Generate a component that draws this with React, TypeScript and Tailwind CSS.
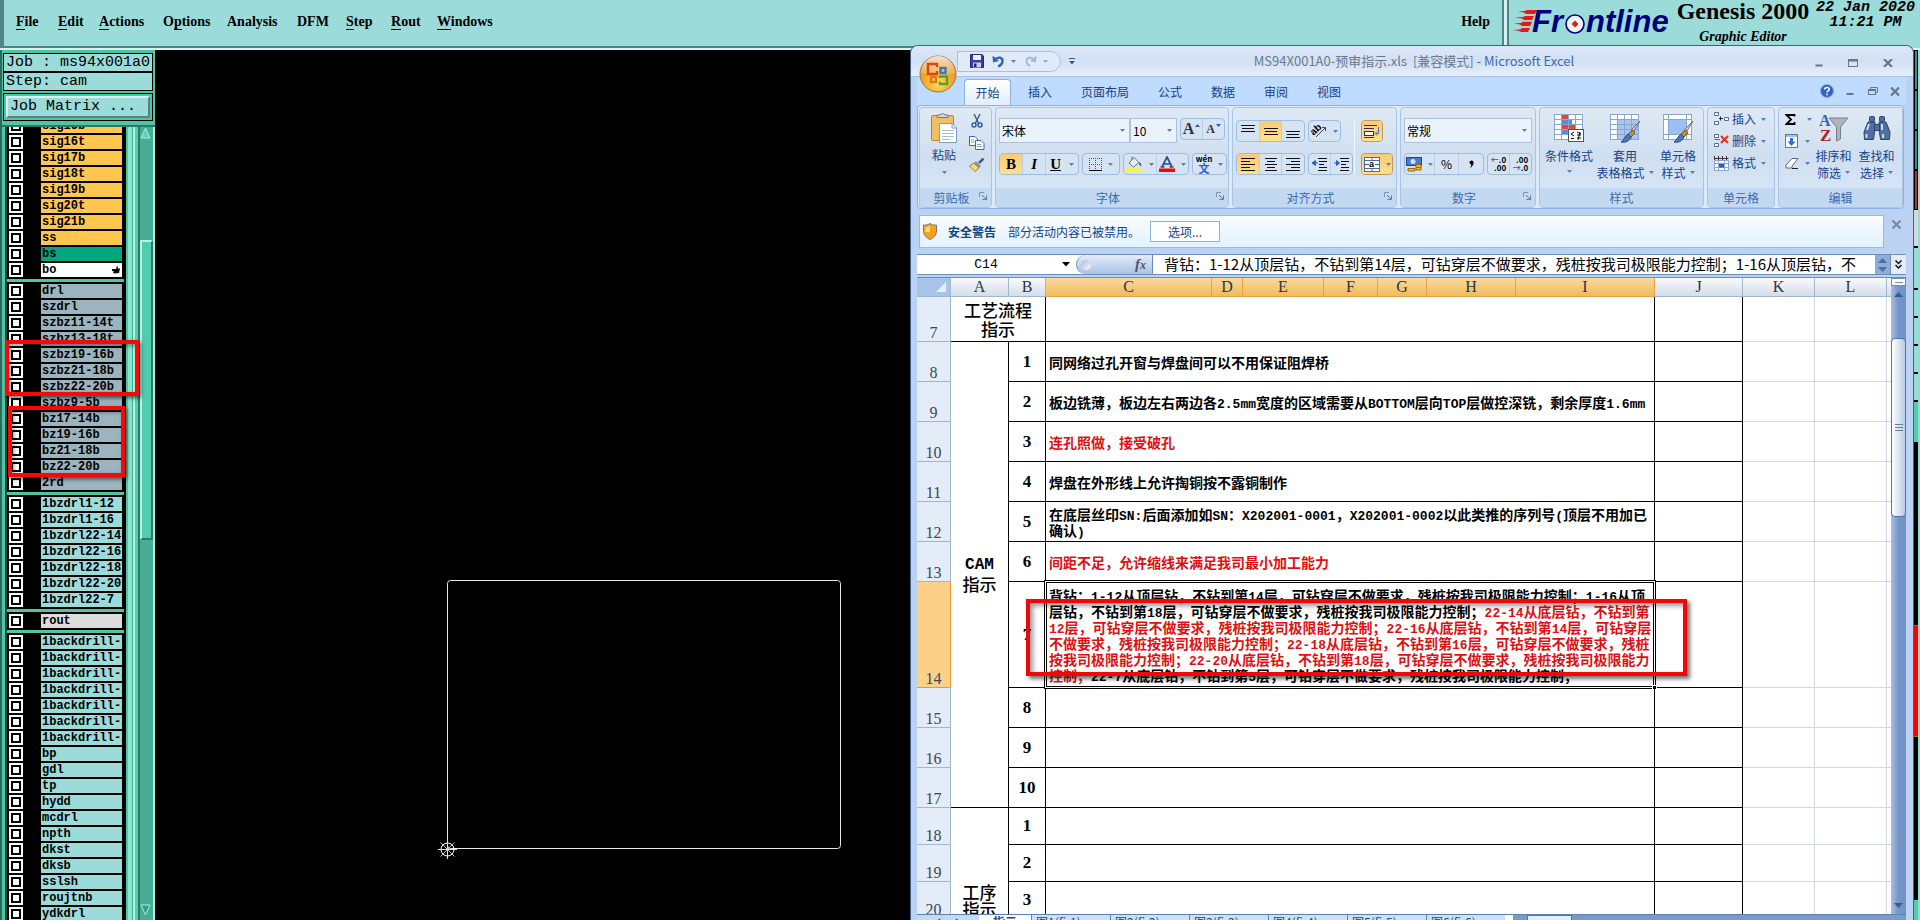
import React from "react";

const UI = "font-['Noto_Sans_CJK_SC',sans-serif]";
const SERIF = "font-['Liberation_Serif','Noto_Serif',serif]";
const MONO = "font-['Liberation_Mono',monospace]";

/* ---------- Genesis header ---------- */

const menus: [string, number, string][] = [
  ["File", 0, "w-[42px]"],
  ["Edit", 0, "w-[41px]"],
  ["Actions", 0, "w-[64px]"],
  ["Options", 1, "w-[64px]"],
  ["Analysis", -1, "w-[70px]"],
  ["DFM", -1, "w-[49px]"],
  ["Step", 0, "w-[45px]"],
  ["Rout", 0, "w-[46px]"],
  ["Windows", 0, "w-[70px]"],
];

function MenuLabel({ text, at }: { text: string; at: number }) {
  if (at < 0) return <>{text}</>;
  return (
    <>
      {text.slice(0, at)}
      <span className="border-b border-black">{text[at]}</span>
      {text.slice(at + 1)}
    </>
  );
}

function FrontlineLogo() {
  return (
    <svg width="162" height="28" viewBox="0 0 162 28" role="img" aria-label="Frontline">
      <g fill="#f01410">
        <path d="M5 3.500 L12 3 L14 2 L24 2 L22 6 L13 6 L11 4.500 Z" />
        <path d="M2 9.500 L10 9 L12 8 L21 8 L19 12 L11 12 L9 10.500 Z" />
        <path d="M1 15.500 L8 15 L10 13.800 L19 13.800 L17 18 L9 18 L7 16.500 Z" />
        <path d="M0 22 L7 21.500 L9 20 L17 20 L15 24 L8 24 L6 23 Z" />
      </g>
      <text
        x="19"
        y="24"
        fill="#00007c"
        fontFamily="Liberation Sans"
        fontWeight="bold"
        fontStyle="italic"
        fontSize="31"
      >
        Fr
      </text>
      <circle cx="62" cy="16" r="9" fill="#e8f8f8" stroke="#00007c" strokeWidth="1.600" />
      <path d="M62 12.500 L65.500 16 L62 19.500 L58.500 16 Z" fill="#f01410" />
      <text
        x="73"
        y="24"
        fill="#00007c"
        fontFamily="Liberation Sans"
        fontWeight="bold"
        fontStyle="italic"
        fontSize="31"
      >
        ntline
      </text>
    </svg>
  );
}

function Header() {
  return (
    <header className={`flex h-[50px] shrink-0 border-b-2 border-[#d8f4f2] bg-[#9bdbda] text-black ${SERIF}`}>
      <nav className="flex flex-1 items-start border-b-2 border-l-4 border-b-[#4f8584] border-l-[#4f8584] pt-[13px] pl-3 text-sm leading-[18px] font-bold">
        {menus.map(([text, at, w]) => (
          <button key={text} type="button" className={`shrink-0 text-left ${w}`}>
            <MenuLabel text={text} at={at} />
          </button>
        ))}
        <button type="button" className="mr-3 ml-auto">
          Help
        </button>
      </nav>
      <div className="w-[7px] border-x-2 border-[#4f8584] bg-[#d8f4f2]" />
      <div className="flex w-[411px] pl-1">
        <div className="pt-2">
          <FrontlineLogo />
        </div>
        <div className="flex w-[136px] flex-col items-center">
          <span className="text-2xl leading-[22px] font-bold">Genesis 2000</span>
          <span className="pt-1.5 text-sm leading-[18px] font-bold italic">Graphic Editor</span>
        </div>
        <div className={`flex flex-1 flex-col items-center text-[15px] leading-[15px] font-bold italic ${MONO}`}>
          <span>22 Jan 2020</span>
          <span>11:21 PM</span>
        </div>
      </div>
    </header>
  );
}

/* ---------- Layer list ---------- */

type Layer = [string, string];
const AQUA = "bg-[#9bdbda]";
const GREY = "bg-[#9bb4be]";
const GOLD = "bg-[#ffc64f]";

const layerGroups: Layer[][] = [
  [
    ["sig15b", GOLD],
    ["sig16t", GOLD],
    ["sig17b", GOLD],
    ["sig18t", GOLD],
    ["sig19b", GOLD],
    ["sig20t", GOLD],
    ["sig21b", GOLD],
    ["ss", GOLD],
    ["bs", "bg-[#00a67c]"],
    ["bo", "bg-white"],
  ],
  [
    "drl",
    "szdrl",
    "szbz11-14t",
    "szbz13-18t",
    "szbz19-16b",
    "szbz21-18b",
    "szbz22-20b",
    "szbz9-5b",
    "bz17-14b",
    "bz19-16b",
    "bz21-18b",
    "bz22-20b",
    "2rd",
  ].map((n): Layer => [n, GREY]),
  ["1bzdrl1-12", "1bzdrl1-16", "1bzdrl22-14", "1bzdrl22-16", "1bzdrl22-18", "1bzdrl22-20", "1bzdrl22-7"].map(
    (n): Layer => [n, AQUA],
  ),
  [["rout", "bg-[#dcdcdc]"]],
  [
    "1backdrill-1",
    "1backdrill-1",
    "1backdrill-2",
    "1backdrill-2",
    "1backdrill-2",
    "1backdrill-2",
    "1backdrill-2",
    "bp",
    "gdl",
    "tp",
    "hydd",
    "mcdrl",
    "npth",
    "dkst",
    "dksb",
    "sslsh",
    "roujtnb",
    "ydkdrl",
  ].map((n): Layer => [n, AQUA]),
];

function LayerRow({ id, name, color }: { id: string; name: string; color: string }) {
  return (
    <div className="flex h-4 items-start">
      <span className="flex h-3.5 w-3.5 items-center justify-center bg-white">
        <input
          id={id}
          type="checkbox"
          className="block h-2.5 w-2.5 appearance-none border-2 border-black bg-white"
        />
      </span>
      <label
        htmlFor={id}
        className={`ml-[18px] flex h-3.5 w-[81px] items-center overflow-hidden pl-px text-xs leading-[14px] font-bold whitespace-nowrap text-black ${MONO} ${color}`}
      >
        {name}
        {name === "bo" && (
          <svg className="mr-0.5 ml-auto" width="8" height="8" viewBox="0 0 8 8" aria-hidden="true">
            <path d="M0 3 L4 3 L5 0 L6 1 L5.500 2.500 L8 2.500 L7 7 L2 7.500 L1 6 L2 5 L0 5 Z" fill="#000" />
          </svg>
        )}
      </label>
    </div>
  );
}

function Sidebar() {
  return (
    <aside
      className={`relative flex w-[155px] shrink-0 flex-col border-l-2 border-[#2c6a5e] bg-[#52c4a4] pt-[3px] text-black ${MONO}`}
    >
      <div className="mx-px mr-0.5 border border-black bg-[#9bdbda] pl-0.5 text-[15px] leading-[17px] whitespace-nowrap">
        Job : ms94x001a0
      </div>
      <div className="mx-px mr-0.5 border border-black bg-[#9bdbda] pl-0.5 text-[15px] leading-[17px]">Step: cam</div>
      <div className="mx-px mt-0.5 mr-0.5 border border-black bg-[#52c4a4] p-0.5">
        <button
          type="button"
          className="block w-full border-2 border-t-[#d8f4f2] border-r-[#4f8584] border-b-[#4f8584] border-l-[#d8f4f2] bg-[#9bdbda] pl-0.5 text-left text-[15px] leading-[18px]"
        >
          Job Matrix ...
        </button>
      </div>
      <div className="mt-1 flex min-h-0 flex-1 border-t-2 border-[#2c7a66]">
        <div className="w-[5px] border-r-2 border-[#1f4f46] bg-[#52c4a4]" />
        <div className="flex w-[117px] flex-col gap-[3px] overflow-hidden bg-[#52c4a4]">
          {layerGroups.map((group, g) => (
            <div key={g} className={g === 0 ? "-mt-2.5 bg-black pt-0.5 pl-0.5" : "bg-black pt-0.5 pl-0.5"}>
              {group.map(([name, color], i) => (
                <LayerRow key={i} id={`layer-${g}-${i}`} name={name} color={color} />
              ))}
            </div>
          ))}
        </div>
        <div className="flex flex-1">
          <div className="w-1 border-l-2 border-black bg-[#52c4a4]" />
          <div className="w-1 bg-[#8ce6cc]" />
          <div className="w-px bg-[#3fae90]" />
          <div className="w-0.5 bg-[#b4f4e4]" />
          <div className="w-[3px] bg-[#52d0b0]" />
          <div className="flex flex-1 flex-col border-r-2 border-l-2 border-r-[#a8f0dc] border-l-[#2c7a66] bg-[#45ae95]">
            <svg width="11" height="12" viewBox="0 0 11 12" aria-hidden="true">
              <path d="M5.500 1 L10 11 L1 11 Z" fill="#62d0b6" stroke="#a8f0dc" />
            </svg>
            <div className="mt-[101px] h-[300px] border-2 border-t-[#b4f4e4] border-r-[#2c7a66] border-b-[#2c7a66] border-l-[#b4f4e4] bg-[#52ccb0]" />
            <svg className="mt-auto mb-1" width="11" height="12" viewBox="0 0 11 12" aria-hidden="true">
              <path d="M1 1 L10 1 L5.500 11 Z" fill="#3a9c86" stroke="#a8f0dc" />
            </svg>
          </div>
        </div>
      </div>
      {/* annotation frames over the selected layers */}
      <div className="pointer-events-none absolute top-[290px] left-[3px] h-[56px] w-[134px] border-4 border-[#f80808] shadow-[2px_2px_4px_rgba(0,0,0,0.6),inset_2px_2px_4px_rgba(0,0,0,0.4)]" />
      <div className="pointer-events-none absolute top-[356px] left-[6px] h-[71px] w-[117px] border-4 border-[#f80808] shadow-[2px_2px_4px_rgba(0,0,0,0.6),inset_2px_2px_4px_rgba(0,0,0,0.4)]" />
    </aside>
  );
}

function Canvas() {
  return (
    <main className="min-w-0 flex-1 overflow-hidden bg-black">
      <svg width="720" height="860" viewBox="155 50 720 860" className="block" aria-label="board outline">
        <rect x="447.500" y="580.500" width="393" height="268" rx="3" fill="none" stroke="#e8e8e8" />
        <g stroke="#e0e0e0" fill="none" strokeWidth="1">
          <circle cx="447.500" cy="849.500" r="6.500" stroke="#fff" />
          <path d="M438 849.500 H457 M447.500 840 V859" />
          <path d="M440.500 842.500 L454.500 856.500 M454.500 842.500 L440.500 856.500" stroke="#c0c0c0" />
        </g>
      </svg>
    </main>
  );
}

function RightStrip() {
  return (
    <div className="flex w-[6px] shrink-0 flex-col border-r-2 border-[#8fe0cc] bg-black">
      <div className="h-10 border border-black bg-[#4f8584]" />
      <div className="h-10 border border-black bg-[#4f8584]" />
      <div className="h-10 border border-black bg-[#4f8584]" />
      <div className="h-10 border border-black bg-[#b03030]" />
      <div className="h-9 bg-[#d4d8e0]" />
      <div className="h-11 border-y-2 border-black bg-[#9bdbda]" />
      <div className="h-7 border-b-2 border-black bg-[#9bdbda]" />
      <div className="h-7 border-b-2 border-black bg-[#9bdbda]" />
      <div className="h-7 border-b-2 border-black bg-[#9bdbda]" />
      <div className="h-7 border-b-2 border-black bg-[#9bdbda]" />
      <div className="h-10 bg-[#52ccb0]" />
      <div className="h-[183px] bg-black" />
      <div className="h-[112px] border-y border-[#b06010] bg-[#ff0000]" />
      <div className="flex-1 bg-black" />
      <div className="h-5 bg-[#52ccb0]" />
    </div>
  );
}

/* ---------- Excel window ---------- */

function Caret({ className = "" }: { className?: string }) {
  return (
    <svg className={`shrink-0 ${className}`} width="5" height="3" viewBox="0 0 5 3" aria-hidden="true">
      <path d="M0 0 H5 L2.500 3 Z" fill="#5a7fb4" />
    </svg>
  );
}

function OfficeButton() {
  return (
    <button type="button" aria-label="Office" className="absolute top-[9px] left-2 rounded-full">
      <svg width="38" height="38" viewBox="0 0 38 38">
        <defs>
          <radialGradient id="orb" cx="50%" cy="75%" r="75%">
            <stop offset="0" stopColor="#ffe060" />
            <stop offset="0.5" stopColor="#f3a92a" />
            <stop offset="1" stopColor="#d88a3a" />
          </radialGradient>
          <linearGradient id="gloss" x1="0" y1="0" x2="0" y2="1">
            <stop offset="0" stopColor="#fff" stopOpacity="0.75" />
            <stop offset="1" stopColor="#fff" stopOpacity="0.1" />
          </linearGradient>
        </defs>
        <circle cx="19" cy="19" r="18" fill="url(#orb)" stroke="#98794c" />
        <path d="M2 18 A17 17 0 0 1 36 18 Q19 23 2 18 Z" fill="url(#gloss)" />
        <g fill="none" strokeWidth="2.400">
          <path d="M18 12 V9 H9 V19 H18 V16" stroke="#d8451c" />
          <rect x="21.500" y="13" width="5" height="5" stroke="#3a76c4" />
          <rect x="12" y="22" width="5" height="5" stroke="#e07818" />
          <path d="M21 23 V21.500 H28 V29 H21 V26.500" stroke="#5aa030" />
        </g>
      </svg>
    </button>
  );
}

function TitleBar() {
  return (
    <div className="flex h-[30px] items-center bg-gradient-to-b from-[#dce8f8] via-[#d2e0f4] to-[#e6effb] pr-5 text-[#5a7fb4]">
      <div className="ml-[46px] flex h-[21px] items-center rounded-r-full border border-[#a9c0e2] bg-[#e0eaf8] pr-3 pl-3">
        <button type="button" aria-label="保存">
          <svg width="14" height="14" viewBox="0 0 14 14">
            <path d="M0.500 0.500 H12 L13.500 2 V13.500 H0.500 Z" fill="#3a3fa0" stroke="#22277a" />
            <rect x="3" y="1" width="8" height="5" fill="#e8f0ff" />
            <rect x="3" y="8.500" width="8" height="5" fill="#c8cce8" />
            <rect x="4" y="9.500" width="2.500" height="3.500" fill="#22277a" />
          </svg>
        </button>
        <button type="button" aria-label="撤消" className="ml-2 flex items-center gap-1.5">
          <svg width="13" height="13" viewBox="0 0 13 13">
            <path
              d="M2.500 5 C6 1 11 2.500 10.500 6.500 C10.200 9 8.500 10.500 6 11.500"
              fill="none"
              stroke="#3562b8"
              strokeWidth="2.400"
            />
            <path d="M0.500 0.500 L1 7.500 L7 6 Z" fill="#3562b8" />
          </svg>
          <Caret />
        </button>
        <button type="button" aria-label="恢复" className="ml-2 flex items-center gap-1.5">
          <svg width="13" height="13" viewBox="0 0 13 13">
            <path d="M10 5 C7 1 2 2.500 2.500 6.500 C2.800 9 4 10 6 11" fill="none" stroke="#a6b8d6" strokeWidth="2" />
            <path d="M12.500 0.500 L12 7.500 L6 6 Z" fill="#a6b8d6" />
          </svg>
          <Caret className="opacity-60" />
        </button>
      </div>
      <svg className="ml-2" width="6" height="7" viewBox="0 0 6 7" aria-hidden="true">
        <path d="M0 0.500 H6" stroke="#3a5a8a" />
        <path d="M0 3 H6 L3 6.500 Z" fill="#3a5a8a" />
      </svg>
      <div className="flex flex-1 justify-center pr-[62px] text-[13px] whitespace-pre">
        <span className="text-[#6b7a8e]">MS94X001A0-预审指示.xls&nbsp; [兼容模式]</span>
        <span className="text-[#3e6aaa]"> - Microsoft Excel</span>
      </div>
      <div className="flex w-[78px] items-center justify-between pt-1">
        <button type="button" aria-label="最小化">
          <svg width="8" height="8" viewBox="0 0 8 8">
            <path d="M0.500 6.500 H7.500" stroke="#6a7686" strokeWidth="2" />
          </svg>
        </button>
        <button type="button" aria-label="最大化">
          <svg width="10" height="8" viewBox="0 0 10 8">
            <rect x="0.500" y="0.500" width="9" height="7" fill="none" stroke="#6a7686" />
            <path d="M0 1.500 H10" stroke="#6a7686" strokeWidth="2" />
          </svg>
        </button>
        <button type="button" aria-label="关闭">
          <svg width="10" height="8" viewBox="0 0 10 8">
            <path d="M1 0 L9 8 M9 0 L1 8" stroke="#6a7686" strokeWidth="2.200" />
          </svg>
        </button>
      </div>
    </div>
  );
}

const ribbonTabs: [string, string][] = [
  ["插入", "w-[58px]"],
  ["页面布局", "w-[72px]"],
  ["公式", "w-[58px]"],
  ["数据", "w-[48px]"],
  ["审阅", "w-[58px]"],
  ["视图", "w-[48px]"],
];

function TabRow() {
  return (
    <div className="flex h-7 items-end bg-[#bfdbff] pl-[47px] text-xs text-[#15428b]">
      <button
        type="button"
        className="h-[26px] w-[47px] rounded-t border border-b-0 border-[#8db2e3] bg-gradient-to-b from-white to-[#e3edf9]"
      >
        开始
      </button>
      {ribbonTabs.map(([t, w]) => (
        <button key={t} type="button" className={`h-[26px] ${w}`}>
          {t}
        </button>
      ))}
      <div className="mr-1.5 ml-auto flex h-full items-center gap-3">
        <button type="button" aria-label="帮助">
          <svg width="14" height="14" viewBox="0 0 14 14">
            <circle cx="7" cy="7" r="6.500" fill="#2f63c4" stroke="#8aa8dc" />
            <path
              d="M4.700 5.500 C4.700 2.800 9.300 2.800 9.300 5.300 C9.300 6.800 7 6.800 7 8.500 M7 9.700 V11.200"
              fill="none"
              stroke="#fff"
              strokeWidth="1.600"
            />
          </svg>
        </button>
        <svg width="8" height="8" viewBox="0 0 8 8" aria-hidden="true">
          <path d="M0.500 7 H7.500" stroke="#6a7686" strokeWidth="2" />
        </svg>
        <svg className="ml-0.5" width="10" height="9" viewBox="0 0 10 9" aria-hidden="true">
          <path d="M2.500 2 V0.500 H9.500 V5.500 H8" fill="none" stroke="#6a7686" />
          <rect x="0.500" y="2.500" width="7" height="5" fill="none" stroke="#6a7686" />
          <path d="M0 3 H8" stroke="#6a7686" strokeWidth="2" />
        </svg>
        <svg width="10" height="9" viewBox="0 0 10 9" aria-hidden="true">
          <path d="M1 0.500 L9 8.500 M9 0.500 L1 8.500" stroke="#6a7686" strokeWidth="2.200" />
        </svg>
      </div>
    </div>
  );
}

function Group({
  label,
  width,
  launcher,
  children,
}: {
  label: string;
  width: string;
  launcher?: boolean;
  children: React.ReactNode;
}) {
  return (
    <section
      className={`flex h-[101px] shrink-0 flex-col overflow-hidden rounded border border-[#a9c4e4] bg-gradient-to-b from-[#dfe9f5] via-[#cfdff0] to-[#dbe9f8] ${width}`}
    >
      <div className="min-h-0 flex-1">{children}</div>
      <div className="flex h-[19px] items-center bg-[#c2d9f1] px-1 text-xs text-[#3e6aaa]">
        <span className="flex-1 text-center">{label}</span>
        {launcher && (
          <svg className="mb-1" width="8" height="8" viewBox="0 0 8 8" aria-hidden="true">
            <path d="M0.500 5 V0.500 H5" fill="none" stroke="#7a94ba" />
            <path d="M3 3 L7 7 M7.500 3.500 V7.500 H3.500" fill="none" stroke="#5a7aa8" />
          </svg>
        )}
      </div>
    </section>
  );
}

function Cluster({ className = "", children }: { className?: string; children: React.ReactNode }) {
  return (
    <div
      className={`flex h-[22px] shrink-0 divide-x divide-[#b9cee8] overflow-hidden rounded-sm border border-[#9ebce0] bg-[#d5e3f3] ${className}`}
    >
      {children}
    </div>
  );
}

function Tool({
  label,
  on,
  drop,
  className = "",
  children,
}: {
  label: string;
  on?: boolean;
  drop?: boolean;
  className?: string;
  children: React.ReactNode;
}) {
  return (
    <button
      type="button"
      aria-label={label}
      className={`flex flex-1 items-center justify-center gap-1.5 ${on ? "bg-gradient-to-b from-[#fbc97a] to-[#fde08c]" : ""} ${className}`}
    >
      {children}
      {drop && <Caret />}
    </button>
  );
}

function Lines({ rows, y, step }: { rows: [number, number][]; y: number; step: number }) {
  return (
    <svg width="14" height="16" viewBox="0 0 14 16" aria-hidden="true">
      {rows.map(([x, w], i) => (
        <rect key={i} x={x} y={y + i * step} width={w} height={step > 3 ? 2 : 1} fill="#111" />
      ))}
    </svg>
  );
}

const three: [number, number][] = [
  [0, 14],
  [1, 12],
  [0, 14],
];

function Combo({ id, label, value, width }: { id: string; label: string; value: string; width: string }) {
  return (
    <div className={`relative flex h-[25px] shrink-0 items-center border border-[#abc1de] bg-[#eaf2fb] ${width}`}>
      <label htmlFor={id} className="sr-only">
        {label}
      </label>
      <select id={id} className="h-full w-full appearance-none bg-transparent pl-0.5 text-xs text-black">
        <option>{value}</option>
      </select>
      <Caret className="pointer-events-none absolute right-1" />
    </div>
  );
}

function Clipboard() {
  return (
    <Group label="剪贴板" width="w-[73px]" launcher>
      <div className="flex justify-between pt-1 pr-1.5 pl-2.5">
        <button type="button" className="flex flex-col items-center text-xs leading-4 text-[#15428b]">
          <svg width="28" height="31" viewBox="0 0 28 31" aria-hidden="true">
            <rect x="1.500" y="3.500" width="22" height="25" rx="1.500" fill="#f0bf62" stroke="#b8852f" />
            <path d="M7 5.500 V3 H10 A3 3 0 0 1 15 3 H18 V5.500 Z" fill="#d5d9de" stroke="#777" />
            <path d="M9.500 11.500 H22 L26.500 16 V30.500 H9.500 Z" fill="#fff" stroke="#7d9cc6" />
            <path d="M22 11.500 V16 H26.500" fill="none" stroke="#7d9cc6" />
            <path d="M12 18.500 H24 M12 21.500 H24 M12 24.500 H24 M12 27.500 H20" stroke="#a8bcd8" />
          </svg>
          <span className="mt-1">粘贴</span>
          <Caret className="mt-2" />
        </button>
        <div className="flex flex-col items-center gap-2 pt-0.5">
          <svg width="12" height="14" viewBox="0 0 12 14" aria-hidden="true">
            <path d="M3 0 L7.500 9 M9 0 L4.500 9" stroke="#4a5e80" strokeWidth="1.500" />
            <circle cx="3" cy="11" r="2" fill="none" stroke="#2f5cac" strokeWidth="1.500" />
            <circle cx="9" cy="11" r="2" fill="none" stroke="#2f5cac" strokeWidth="1.500" />
          </svg>
          <svg width="16" height="14" viewBox="0 0 16 14" aria-hidden="true">
            <path d="M0.500 0.500 H6 L8.500 3 V9.500 H0.500 Z" fill="#fff" stroke="#3e68ae" />
            <path d="M6.500 4.500 H12 L15 7.500 V13.500 H6.500 Z" fill="#fff" stroke="#3e68ae" />
            <path d="M2 4 H5 M2 6 H5 M8 8.500 H12 M8 10.500 H13" stroke="#7da0d8" />
          </svg>
          <svg width="16" height="14" viewBox="0 0 16 14" aria-hidden="true">
            <path d="M14.500 0.500 L10 5" stroke="#4a5e80" strokeWidth="2.500" />
            <path d="M7 3 L12 8 L10 10 L5 5 Z" fill="#8a94a8" />
            <path d="M5 5 L10 10 L6 13.500 L0.500 8 Z" fill="#f4d678" stroke="#a88020" />
          </svg>
        </div>
      </div>
    </Group>
  );
}

function FontGroup() {
  return (
    <Group label="字体" width="w-[234px]" launcher>
      <div className="flex px-[3px] pt-2.5">
        <Combo id="font-name" label="字体" value="宋体" width="w-[131px]" />
        <Combo id="font-size" label="字号" value="10" width="w-[47px]" />
        <Cluster className={`ml-[3px] w-[45px] ${SERIF}`}>
          <Tool label="增大字号" className="gap-px text-base font-bold text-[#333]">
            A
            <svg className="mb-2" width="5" height="3" viewBox="0 0 5 3">
              <path d="M0 3 H5 L2.500 0 Z" fill="#2f5cac" />
            </svg>
          </Tool>
          <Tool label="减小字号" className="gap-px text-xs font-bold text-[#333]">
            A
            <svg className="mb-2" width="5" height="3" viewBox="0 0 5 3">
              <path d="M0 0 H5 L2.500 3 Z" fill="#2f5cac" />
            </svg>
          </Tool>
        </Cluster>
      </div>
      <div className="flex gap-[3px] px-[3px] pt-2.5">
        <Cluster className={`w-[80px] ${SERIF}`}>
          <Tool label="加粗" on className="text-[15px] font-bold">
            B
          </Tool>
          <Tool label="倾斜" className="text-[15px] font-bold italic">
            I
          </Tool>
          <Tool label="下划线" drop className="gap-2 px-1 text-[15px] font-bold">
            <span className="underline">U</span>
          </Tool>
        </Cluster>
        <Cluster className="w-[38px]">
          <Tool label="边框" drop>
            <svg width="13" height="13" viewBox="0 0 13 13">
              <path
                d="M0.500 0 V12 M6.500 0 V12 M12.500 0 V12 M0 0.500 H13 M0 6.500 H13"
                stroke="#555"
                strokeDasharray="1 1"
              />
              <path d="M0 12.500 H13" stroke="#000" />
            </svg>
          </Tool>
        </Cluster>
        <Cluster className="w-[66px]">
          <Tool label="填充颜色" drop>
            <svg width="17" height="16" viewBox="0 0 17 16">
              <path d="M3 7 L8 1.500 L13 6.500 L7.500 11 Z" fill="#e8eef8" stroke="#5a6e90" />
              <path d="M6 4 V0.500" stroke="#5a6e90" />
              <path d="M13 6 C15.500 7 15.500 9 15 10.500 C13.500 10 13 8 13 6 Z" fill="#2f5cac" />
              <rect x="0" y="12.500" width="16" height="3.500" fill="#ffff00" />
            </svg>
          </Tool>
          <Tool label="字体颜色" drop>
            <svg width="16" height="16" viewBox="0 0 16 16">
              <path
                d="M3 11 L8 1 L13 11 M5 8 H11 M1.500 11 H5.500 M10.500 11 H14.500"
                fill="none"
                stroke="#2c4f8e"
                strokeWidth="1.700"
              />
              <rect x="0" y="12.500" width="16" height="3.500" fill="#ff0000" />
            </svg>
          </Tool>
        </Cluster>
        <Cluster className="w-[35px]">
          <Tool label="拼音" drop className="gap-1">
            <span className="flex flex-col items-center text-[8px] leading-[9px] font-bold text-black">
              wén
              <span className="text-[11px] leading-[11px] font-bold text-[#2f5cc4]">文</span>
            </span>
          </Tool>
        </Cluster>
      </div>
    </Group>
  );
}

function AlignGroup() {
  return (
    <Group label="对齐方式" width="w-[165px]" launcher>
      <div className="flex px-[3px] pt-3">
        <div className="flex w-[120px] flex-col gap-[11px] border-r border-[#f4f8fd]">
          <div className="flex gap-[3px]">
            <Cluster className="w-[69px]">
              <Tool label="顶端对齐">
                <Lines rows={three} y={2} step={3} />
              </Tool>
              <Tool label="垂直居中" on>
                <Lines rows={three} y={5} step={3} />
              </Tool>
              <Tool label="底端对齐">
                <Lines rows={three} y={8} step={3} />
              </Tool>
            </Cluster>
            <Cluster className="w-[33px]">
              <Tool label="方向" drop className="gap-1">
                <svg width="16" height="14" viewBox="0 0 16 14">
                  <path d="M5 13 L14 4" stroke="#445" />
                  <path d="M14.500 7 V3.500 H11" fill="none" stroke="#445" />
                  <text
                    x="0"
                    y="9"
                    fontSize="10"
                    fontFamily="Liberation Sans"
                    fontWeight="bold"
                    transform="rotate(-42 5 7)"
                  >
                    ab
                  </text>
                </svg>
              </Tool>
            </Cluster>
          </div>
          <div className="flex gap-[3px]">
            <Cluster className="w-[69px]">
              <Tool label="左对齐" on>
                <Lines rows={[[0, 14], [0, 9], [0, 14], [0, 9], [0, 14]]} y={2} step={3} />
              </Tool>
              <Tool label="居中">
                <Lines rows={[[1, 12], [3, 8], [1, 12], [3, 8], [1, 12]]} y={2} step={3} />
              </Tool>
              <Tool label="右对齐">
                <Lines rows={[[0, 14], [5, 9], [0, 14], [5, 9], [0, 14]]} y={2} step={3} />
              </Tool>
            </Cluster>
            <Cluster className="w-[45px]">
              <Tool label="减少缩进">
                <svg width="15" height="13" viewBox="0 0 15 13">
                  <path d="M6 0.500 H15 M7 3.500 H15 M7 6.500 H12 M7 9.500 H15 M6 12.500 H15" stroke="#111" />
                  <path d="M0 5 L3.500 2.500 V7.500 Z M3 5 H6" fill="#2f5cc4" stroke="#2f5cc4" />
                </svg>
              </Tool>
              <Tool label="增加缩进">
                <svg width="15" height="13" viewBox="0 0 15 13">
                  <path d="M6 0.500 H15 M7 3.500 H15 M7 6.500 H12 M7 9.500 H15 M6 12.500 H15" stroke="#111" />
                  <path d="M5.500 5 L2.500 2.500 V7.500 Z M0 5 H3" fill="#2f5cc4" stroke="#2f5cc4" />
                </svg>
              </Tool>
            </Cluster>
          </div>
        </div>
        <div className="flex flex-col gap-[11px] pl-1.5">
          <Cluster className="w-[22px] border-[#c09a5a]">
            <Tool label="自动换行" on>
              <svg width="16" height="15" viewBox="0 0 16 15">
                <path d="M0 1.500 H13 M0 4.500 H10 M0 13.500 H10" stroke="#334" />
                <rect x="0.500" y="7.500" width="9" height="4" fill="#fff" stroke="#334" />
                <path d="M14.500 3 V9.500 H12 M13 7.500 L11 9.500 L13 11.500" fill="none" stroke="#3e68ae" />
              </svg>
            </Tool>
          </Cluster>
          <Cluster className="w-8 border-[#c09a5a]">
            <Tool label="合并后居中" on drop className="gap-1">
              <svg width="16" height="15" viewBox="0 0 16 15">
                <rect x="0.500" y="0.500" width="15" height="14" fill="#fff" stroke="#4a6ea8" />
                <path d="M0 3.500 H16 M0 11.500 H16 M8 0 V3 M8 12 V15" stroke="#4a6ea8" />
                <path d="M1 7.500 H5 M11 7.500 H15" stroke="#2f5cc4" />
                <text x="5" y="10" fontSize="9" fontWeight="bold" fontFamily="Liberation Sans">
                  a
                </text>
              </svg>
            </Tool>
          </Cluster>
        </div>
      </div>
    </Group>
  );
}

function NumberGroup() {
  return (
    <Group label="数字" width="w-[136px]" launcher>
      <div className="px-[3px] pt-2.5">
        <Combo id="number-format" label="数字格式" value="常规" width="w-[128px]" />
      </div>
      <div className="flex gap-[3px] px-[3px] pt-2.5">
        <Cluster className="w-[80px]">
          <Tool label="会计数字格式" drop>
            <svg width="16" height="15" viewBox="0 0 16 15">
              <rect x="0.500" y="0.500" width="15" height="8" fill="#4a7ad0" stroke="#1f4490" />
              <ellipse cx="7" cy="4.500" rx="2.500" ry="2.500" fill="#cfe0fa" />
              <path d="M10 7.500 H15 V13 H10 Z" fill="#f0b830" stroke="#9a6a10" />
              <path d="M2 11.500 H9 V14 H2 Z M10 10.500 H15" fill="#f0b830" stroke="#9a6a10" />
            </svg>
          </Tool>
          <Tool label="百分比样式" className="max-w-6 text-xs text-black">
            %
          </Tool>
          <Tool label="千位分隔样式" className="max-w-6 text-black">
            <svg width="5" height="8" viewBox="0 0 5 8">
              <circle cx="2.500" cy="2.500" r="2" />
              <path d="M4.500 2.500 C4.500 5 3 7 1 8 C2 6 2.500 5 2.500 3 Z" />
            </svg>
          </Tool>
        </Cluster>
        <Cluster className="w-[45px]">
          <Tool label="增加小数位数">
            <span className="flex flex-col items-end text-[8px] leading-[8px] font-bold text-black">
              <span>
                <span className="text-[#2f5cc4]">←</span>.0
              </span>
              <span>.00</span>
            </span>
          </Tool>
          <Tool label="减少小数位数">
            <span className="flex flex-col items-end text-[8px] leading-[8px] font-bold text-black">
              <span>.00</span>
              <span>
                <span className="text-[#2f5cc4]">→</span>.0
              </span>
            </span>
          </Tool>
        </Cluster>
      </div>
    </Group>
  );
}

function BigTool({
  icon,
  top,
  bottom,
  width,
}: {
  icon: React.ReactNode;
  top: string;
  bottom?: string;
  width: string;
}) {
  return (
    <button
      type="button"
      className={`flex shrink-0 flex-col items-center text-xs leading-[17px] text-[#15428b] ${width}`}
    >
      {icon}
      <span className="mt-[3px] whitespace-nowrap">{top}</span>
      <span className="flex items-center gap-1 whitespace-nowrap">
        {bottom}
        <Caret className={bottom ? "" : "mt-1.5"} />
      </span>
    </button>
  );
}

function Grid30({ children }: { children?: React.ReactNode }) {
  return (
    <svg width="31" height="31" viewBox="0 0 31 31" aria-hidden="true">
      <rect x="0.500" y="1.500" width="28" height="25" fill="#fff" stroke="#8aa6cc" />
      {children}
    </svg>
  );
}

function Brush() {
  return (
    <g>
      <path d="M30 8 L24 18 L20 21 L22 16 Z" fill="#c8ccd4" stroke="#6a7686" />
      <path d="M23 17 L25 20 L21 24 L18 21 Z" fill="#c98a3c" stroke="#80541c" />
      <path d="M18 21 L21 24 C20 28 15 30 11 29 C14 27 15 23 18 21 Z" fill="#4a78bc" stroke="#2c4f8e" />
    </g>
  );
}

function StylesGroup() {
  const lines = "M0 6.500 H29 M0 11.500 H29 M0 16.500 H29 M0 21.500 H29 M7.500 1 V27 M14.500 1 V27 M21.500 1 V27";
  return (
    <Group label="样式" width="w-[165px]">
      <div className="flex pt-[5px] pl-[3px]">
        <BigTool
          width="w-[52px]"
          top="条件格式"
          icon={
            <Grid30>
              <rect x="7" y="2" width="7" height="5" fill="#e8462c" />
              <rect x="7" y="7" width="11" height="5" fill="#5b8be0" />
              <rect x="7" y="12" width="14" height="5" fill="#e8462c" />
              <rect x="7" y="17" width="7" height="5" fill="#5b8be0" />
              <path d={lines} stroke="#8aa6cc" />
              <rect x="14.500" y="16.500" width="15" height="12" fill="#fff" stroke="#555" />
              <path
                d="M20 19 L17 21 L20 23 M17 25.500 H20 M23 19 L27 21 M23 22 H27 M23 25 H27 M26 19 L24 27"
                fill="none"
                stroke="#111"
              />
            </Grid30>
          }
        />
        <BigTool
          width="w-[60px]"
          top="套用"
          bottom="表格格式"
          icon={
            <Grid30>
              <rect x="7" y="7" width="21" height="19" fill="#a9c6f2" />
              <path d={lines} stroke="#8aa6cc" />
              <Brush />
            </Grid30>
          }
        />
        <BigTool
          width="w-[46px]"
          top="单元格"
          bottom="样式"
          icon={
            <Grid30>
              <path d="M0 6.500 H29 M0 21.500 H29 M5.500 1 V27 M23.500 1 V27" stroke="#8aa6cc" />
              <rect x="6" y="7" width="17" height="14" fill="#9cc0f6" />
              <Brush />
            </Grid30>
          }
        />
      </div>
    </Group>
  );
}

function CellsGroup() {
  return (
    <Group label="单元格" width="w-[68px]">
      <div className="flex flex-col gap-1 pt-0.5 pl-1.5 text-xs leading-[18px] text-[#15428b]">
        <button type="button" className="flex items-center gap-[3px]">
          <svg width="15" height="14" viewBox="0 0 15 14" aria-hidden="true">
            <path
              d="M0.500 0.500 H4.500 V3.500 H0.500 Z M0.500 9.500 H4.500 V12.500 H0.500 Z M10.500 5.500 H14.500 V8.500 H10.500 Z"
              fill="#fff"
              stroke="#566c90"
            />
            <path d="M5 6.500 H9 M6.500 4.500 V8.500" stroke="#222" />
          </svg>
          <span>插入</span>
          <Caret className="ml-0.5" />
        </button>
        <button type="button" className="flex items-center gap-[3px]">
          <svg width="15" height="14" viewBox="0 0 15 14" aria-hidden="true">
            <path
              d="M0.500 0.500 H4.500 V3.500 H0.500 Z M0.500 9.500 H4.500 V12.500 H0.500 Z M0.500 5.500 H6"
              fill="#fff"
              stroke="#566c90"
            />
            <path d="M7 2 L14 9 M14 2 L7 9" stroke="#e0301c" strokeWidth="2" />
          </svg>
          <span>删除</span>
          <Caret className="ml-0.5" />
        </button>
        <button type="button" className="flex items-center gap-[3px]">
          <svg width="15" height="15" viewBox="0 0 15 15" aria-hidden="true">
            <path d="M0.500 2.500 H14.500 M0.500 0 V4 M4.500 0 V4 M8.500 0 V4 M12.500 0 V4" stroke="#333" />
            <path
              d="M0.500 4.500 H14.500 V14.500 H0.500 Z M4.500 4 V15 M10.500 4 V15 M0 7.500 H15 M0 11.500 H15"
              fill="#fff"
              stroke="#8aa6cc"
            />
            <rect x="5" y="8" width="5" height="3.500" fill="#2f5cc4" />
          </svg>
          <span>格式</span>
          <Caret className="ml-0.5" />
        </button>
      </div>
    </Group>
  );
}

function EditGroup() {
  return (
    <Group label="编辑" width="w-[125px]">
      <div className="flex pl-1.5">
        <div className="flex w-[27px] flex-col gap-2 pt-1">
          <button type="button" aria-label="自动求和" className="flex h-3.5 items-center justify-between">
            <svg width="11" height="11" viewBox="0 0 11 11">
              <path d="M9.500 2.500 V1 H1.500 L6 5.500 L1.500 10 H9.500 V8" fill="none" stroke="#000" strokeWidth="1.800" />
            </svg>
            <Caret />
          </button>
          <button type="button" aria-label="填充" className="flex h-3.5 items-center justify-between pr-0.5">
            <svg width="13" height="14" viewBox="0 0 13 14">
              <rect x="0.500" y="0.500" width="12" height="13" fill="#fff" stroke="#5878ac" />
              <path d="M5 4 H8 V7.500 H10.500 L6.500 12 L2.500 7.500 H5 Z" fill="#2f6cdc" />
              <path d="M1 2 H12" stroke="#5878ac" />
            </svg>
            <Caret />
          </button>
          <button type="button" aria-label="清除" className="flex h-3.5 items-center justify-between pr-0.5">
            <svg width="14" height="12" viewBox="0 0 14 12">
              <path d="M1 8 L7 1.500 H13 L7 9 V11 H1 Z" fill="#fff" stroke="#667" />
              <path d="M7 11.500 H13" stroke="#222" />
            </svg>
            <Caret />
          </button>
        </div>
        <div className="flex flex-1 pt-[5px]">
          <BigTool
            width="w-[43px]"
            top="排序和"
            bottom="筛选"
            icon={
              <svg width="31" height="31" viewBox="0 0 31 31" aria-hidden="true">
                <text x="1" y="13" fontSize="16" fontFamily="Liberation Serif" fontWeight="bold" fill="#3562b8">
                  A
                </text>
                <text x="2" y="28" fontSize="17" fontFamily="Liberation Serif" fontWeight="bold" fill="#a82424">
                  Z
                </text>
                <path d="M11 5 H30 L22.500 14 V26 L18.500 28 V14 Z" fill="#b0b4ba" stroke="#7a7e86" />
              </svg>
            }
          />
          <BigTool
            width="w-[43px]"
            top="查找和"
            bottom="选择"
            icon={
              <svg width="30" height="31" viewBox="0 0 30 31" aria-hidden="true">
                <g fill="#4f6f9e" stroke="#2c4670">
                  <rect x="7.500" y="3.500" width="5" height="5" rx="1" />
                  <rect x="17.500" y="3.500" width="5" height="5" rx="1" />
                  <path d="M6 9 H13 V16 L11.500 26.500 H2.500 L2 19 Z" />
                  <path d="M24 9 H17 V16 L18.500 26.500 H27.500 L28 19 Z" />
                  <rect x="12.500" y="11.500" width="5" height="6" />
                </g>
                <path d="M5 17 L7 11 M20 17 V11 M4.500 21 V25 M21 21 V25" stroke="#c8daf4" strokeWidth="2" />
              </svg>
            }
          />
        </div>
      </div>
    </Group>
  );
}

function Ribbon() {
  return (
    <div className="mr-0.5 h-[104px] shrink-0 rounded border border-[#8db2e3] bg-[#dce9f8] p-px">
      <div className="flex gap-[3px]">
        <Clipboard />
        <FontGroup />
        <AlignGroup />
        <NumberGroup />
        <StylesGroup />
        <CellsGroup />
        <EditGroup />
      </div>
    </div>
  );
}

function MessageBar() {
  return (
    <div className="flex py-1.5 pl-0.5 text-xs text-[#15428b]">
      <div className="flex h-[33px] flex-1 items-center border border-[#9cb8dc] bg-gradient-to-b from-[#fafdff] to-[#e0f2fc] pl-[3px]">
        <svg width="14" height="17" viewBox="0 0 14 17" aria-hidden="true">
          <path
            d="M7 0.500 C9 2 11.500 2.300 13.500 2 V8 C13.500 12 10.500 15 7 16.500 C3.500 15 0.500 12 0.500 8 V2 C2.500 2.300 5 2 7 0.500 Z"
            fill="#f7a11c"
            stroke="#777"
          />
          <path d="M2.500 4 C5 4 6 3.500 7 3 V9 H2.500 Z" fill="#ffd98a" />
        </svg>
        <span className="ml-[11px] font-bold">安全警告</span>
        <span className="ml-3">部分活动内容已被禁用。</span>
        <button type="button" className="ml-2.5 h-[21px] w-[70px] border border-[#8fb0d8] bg-white">
          选项...
        </button>
      </div>
      <button type="button" aria-label="关闭消息栏" className="mt-1 mr-[5px] ml-2 h-2.5">
        <svg width="9" height="9" viewBox="0 0 9 9">
          <path d="M0.500 0.500 L8.500 8.500 M8.500 0.500 L0.500 8.500" stroke="#7a8698" strokeWidth="2" />
        </svg>
      </button>
    </div>
  );
}

function FormulaBar() {
  return (
    <div className="mb-0.5 flex h-[21px] shrink-0 items-stretch border-y border-[#6b8ebe] bg-white text-black">
      <div className="relative flex w-[159px] items-center">
        <input
          aria-label="名称框"
          defaultValue="C14"
          className={`h-full w-[138px] bg-transparent text-center text-[13px] ${MONO}`}
        />
        <svg className="absolute right-1.5" width="8" height="5" viewBox="0 0 8 5" aria-hidden="true">
          <path d="M0 0 H8 L4 4.500 Z" fill="#000" />
        </svg>
      </div>
      <div className="flex w-[77px] items-center justify-between rounded-l-full border-r border-l border-[#6b8ebe] bg-gradient-to-b from-[#e3ecf8] to-[#a9c2e6] pr-1.5 pl-1">
        <span className="h-2.5 w-2.5 rounded-full bg-gradient-to-br from-[#a8b8d0] to-white" />
        <span className={`text-[15px] font-bold text-[#4a5568] italic ${SERIF}`}>
          f<span className="text-xs">x</span>
        </span>
      </div>
      <input
        aria-label="编辑栏"
        defaultValue="背钻：1-12从顶层钻，不钻到第14层，可钻穿层不做要求，残桩按我司极限能力控制；1-16从顶层钻，不"
        className="min-w-0 flex-1 bg-transparent pl-[11px] text-[15px]"
      />
      <div className="flex w-[15px] flex-col items-center justify-center gap-1 bg-[#8fabd6]">
        <svg width="9" height="5" viewBox="0 0 9 5" aria-hidden="true">
          <path d="M0 5 H9 L4.500 0 Z" fill="#4a6ea8" />
        </svg>
        <svg width="9" height="5" viewBox="0 0 9 5" aria-hidden="true">
          <path d="M0 0 H9 L4.500 5 Z" fill="#4a6ea8" />
        </svg>
      </div>
      <button
        type="button"
        aria-label="展开编辑栏"
        className="flex w-4 items-center justify-center border-l border-[#6b8ebe] bg-[#e3ecf8]"
      >
        <svg width="7" height="9" viewBox="0 0 7 9">
          <path
            d="M0.500 0.500 L3.500 3.500 L6.500 0.500 M0.500 5 L3.500 8 L6.500 5"
            fill="none"
            stroke="#111"
            strokeWidth="1.500"
          />
        </svg>
      </button>
    </div>
  );
}

/* ---------- Sheet ---------- */

function Mixed({ text }: { text: string }) {
  const parts = text.split(/([\x20-\x7e]+)/);
  return (
    <>
      {parts.map((p, i) =>
        i % 2 ? (
          <span key={i} className="font-['Liberation_Mono',monospace] text-[13px]">
            {p}
          </span>
        ) : (
          p
        ),
      )}
    </>
  );
}

const columns: [string, string, boolean][] = [
  ["A", "w-[58px]", false],
  ["B", "w-[37px]", false],
  ["C", "w-[166px]", true],
  ["D", "w-[31px]", true],
  ["E", "w-[81px]", true],
  ["F", "w-[54px]", true],
  ["G", "w-[49px]", true],
  ["H", "w-[89px]", true],
  ["I", "w-[139px]", true],
  ["J", "w-[88px]", false],
  ["K", "w-[72px]", false],
  ["L", "w-[72px]", false],
];

type Run = { t: string; red?: boolean };
type Row = { n: number; h: string; b: string; lines?: Run[][] };

const rows: Row[] = [
  { n: 8, h: "h-10", b: "1", lines: [[{ t: "同网络过孔开窗与焊盘间可以不用保证阻焊桥" }]] },
  {
    n: 9,
    h: "h-10",
    b: "2",
    lines: [[{ t: "板边铣薄，板边左右两边各2.5mm宽度的区域需要从BOTTOM层向TOP层做控深铣，剩余厚度1.6mm" }]],
  },
  { n: 10, h: "h-10", b: "3", lines: [[{ t: "连孔照做，接受破孔", red: true }]] },
  { n: 11, h: "h-10", b: "4", lines: [[{ t: "焊盘在外形线上允许掏铜按不露铜制作" }]] },
  {
    n: 12,
    h: "h-10",
    b: "5",
    lines: [
      [{ t: "在底层丝印SN:后面添加如SN：X202001-0001，X202001-0002以此类推的序列号(顶层不用加已" }],
      [{ t: "确认)" }],
    ],
  },
  { n: 13, h: "h-10", b: "6", lines: [[{ t: "间距不足，允许缩线来满足我司最小加工能力", red: true }]] },
  {
    n: 14,
    h: "h-[106px]",
    b: "7",
    lines: [
      [{ t: "背钻：1-12从顶层钻，不钻到第14层，可钻穿层不做要求，残桩按我司极限能力控制；1-16从顶" }],
      [
        { t: "层钻，不钻到第18层，可钻穿层不做要求，残桩按我司极限能力控制；" },
        { t: "22-14从底层钻，不钻到第", red: true },
      ],
      [{ t: "12层，可钻穿层不做要求，残桩按我司极限能力控制；22-16从底层钻，不钻到第14层，可钻穿层", red: true }],
      [{ t: "不做要求，残桩按我司极限能力控制；22-18从底层钻，不钻到第16层，可钻穿层不做要求，残桩", red: true }],
      [{ t: "按我司极限能力控制；22-20从底层钻，不钻到第18层，可钻穿层不做要求，残桩按我司极限能力", red: true }],
      [{ t: "控制；", red: true }, { t: "22-7从底层钻，不钻到第5层，可钻穿层不做要求，残桩按我司极限能力控制；" }],
    ],
  },
  { n: 15, h: "h-10", b: "8" },
  { n: 16, h: "h-10", b: "9" },
  { n: 17, h: "h-10", b: "10" },
  { n: 18, h: "h-[37px]", b: "1" },
  { n: 19, h: "h-[37px]", b: "2" },
  { n: 20, h: "h-[37px]", b: "3" },
  { n: 21, h: "h-[37px]", b: "4" },
  { n: 22, h: "h-[37px]", b: "5" },
];

const CELL = "border-r border-b border-black p-0";
const FAINT = "border-r border-b border-[#d0d7e5] p-0";

function RowHead({ n, on }: { n: number; on?: boolean }) {
  return (
    <th
      scope="row"
      className={`border-r border-b p-0 align-bottom text-base leading-4 font-normal text-[#3a4656] ${SERIF} ${
        on ? "border-[#f0953a] bg-[#fdd089]" : "border-[#9eb6ce] bg-[#e4ecf7]"
      }`}
    >
      {n}
    </th>
  );
}

function Sheet() {
  return (
    <div className="relative min-h-0 flex-1 overflow-hidden bg-white text-black">
      <table className="w-full table-fixed border-separate border-spacing-0">
        <colgroup>
          <col className="w-[34px]" />
          {columns.map(([c, w]) => (
            <col key={c} className={w} />
          ))}
          <col />
        </colgroup>
        <thead>
          <tr className="h-[19px]">
            <th className="border-r border-b border-[#9eb6ce] bg-[#a9c4e9] p-0" aria-label="全选">
              <svg className="mr-1 ml-auto block" width="10" height="10" viewBox="0 0 10 10">
                <path d="M10 0 V10 H0 Z" fill="#e4edf8" />
              </svg>
            </th>
            {columns.map(([c, , on]) => (
              <th
                key={c}
                scope="col"
                className={`border-r border-b p-0 text-base leading-[18px] font-normal text-[#27364c] ${SERIF} ${
                  on
                    ? "border-[#e9a04a] bg-gradient-to-b from-[#f9d99f] to-[#f1bb58]"
                    : "border-[#9eb6ce] bg-gradient-to-b from-[#f8fafc] to-[#d5dde9]"
                }`}
              >
                {c}
              </th>
            ))}
            <th className="border-b border-[#9eb6ce] bg-gradient-to-b from-[#f8fafc] to-[#d5dde9] p-0" aria-label="M" />
          </tr>
        </thead>
        <tbody>
          <tr className="h-[45px]">
            <RowHead n={7} />
            <td colSpan={2} className={`${CELL} text-center text-[17px] leading-[19px] font-medium`}>
              工艺流程
              <br />
              指示
            </td>
            <td colSpan={7} className={CELL} />
            <td className={CELL} />
            <td className={FAINT} />
            <td className={FAINT} />
            <td className="border-b border-[#d0d7e5] p-0" />
          </tr>
          {rows.map((r) => (
            <tr key={r.n} className={r.h}>
              <RowHead n={r.n} on={r.n === 14} />
              {r.n === 8 && (
                <td rowSpan={10} className={`${CELL} text-center text-[17px] leading-[19px] font-medium`}>
                  <div className={`h-[17px] text-base leading-[17px] font-bold ${MONO}`}>CAM</div>
                  <div>指示</div>
                </td>
              )}
              {r.n === 18 && (
                <td rowSpan={5} className={`${CELL} text-center text-[17px] leading-[17px] font-medium`}>
                  工序
                  <br />
                  指示
                </td>
              )}
              <td className={`${CELL} text-center text-[17px] leading-5 font-bold ${SERIF}`}>{r.b}</td>
              <td
                colSpan={7}
                className={`${CELL} relative pl-[3px] text-left text-sm leading-4 font-bold whitespace-nowrap`}
              >
                {r.lines?.map((line, i) => (
                  <div key={i} className="h-4">
                    {line.map((run, j) => (
                      <span key={j} className={run.red ? "text-[#e01010]" : ""}>
                        <Mixed text={run.t} />
                      </span>
                    ))}
                  </div>
                ))}
                {r.n === 14 && (
                  <span className="absolute -inset-0.5 border border-black shadow-[inset_0_0_0_1px_#fff,inset_0_0_0_2px_#000]">
                    <span className="absolute -right-0.5 -bottom-0.5 h-[5px] w-[5px] border border-white bg-black" />
                  </span>
                )}
              </td>
              <td className={CELL} />
              <td className={FAINT} />
              <td className={FAINT} />
              <td className="border-b border-[#d0d7e5] p-0" />
            </tr>
          ))}
        </tbody>
      </table>
      {/* annotation frame over the back-drilling notes */}
      <div className="pointer-events-none absolute top-[321px] left-[109px] h-[77px] w-[661px] border-4 border-[#f00808] shadow-[3px_3px_4px_rgba(0,0,0,0.55),inset_3px_3px_5px_rgba(0,0,0,0.4)]" />
    </div>
  );
}

function VerticalScroll() {
  return (
    <div className="flex w-[15px] shrink-0 flex-col items-center bg-gradient-to-r from-[#a8bfe0] via-[#7496c6] to-[#6f92c4]">
      <div className="flex h-2 w-full items-center justify-center border border-[#6b8ebe] bg-white">
        <div className="h-px w-2 bg-[#6b8ebe]" />
      </div>
      <svg className="mt-1.5" width="9" height="5" viewBox="0 0 9 5" aria-hidden="true">
        <path d="M0 5 H9 L4.500 0 Z" fill="#3a5a94" />
      </svg>
      <div className="mt-[41px] flex h-[179px] w-[15px] flex-col items-center justify-center gap-0.5 rounded-sm border border-[#4f74ac] bg-gradient-to-r from-white to-[#b9cbe4]">
        <div className="h-px w-2 bg-[#6a7a94]" />
        <div className="h-px w-2 bg-[#6a7a94]" />
        <div className="h-px w-2 bg-[#6a7a94]" />
      </div>
      <svg className="mt-auto mb-1.5" width="9" height="5" viewBox="0 0 9 5" aria-hidden="true">
        <path d="M0 0 H9 L4.500 5 Z" fill="#3a5a94" />
      </svg>
    </div>
  );
}

function SheetTabs() {
  return (
    <div className="h-1.5 shrink-0 overflow-hidden border-t border-[#5a82ba]">
      <div className="flex h-5 bg-[#7a9ac8] text-xs leading-[14px] text-[#1f4490]">
        <div className="w-[62px] shrink-0 bg-[#c5d9f1] text-center text-[8px]">◀ ◂ ▸ ▶</div>
        <div className="w-[52px] shrink-0 bg-white text-center font-bold">指示</div>
        {["1", "2", "3", "4", "5", "6"].map((n) => (
          <div
            key={n}
            className="w-[79px] shrink-0 border-l border-[#5a82ba] bg-[#cfe0f5] pl-1"
          >{`图${n}(fi-${n})`}</div>
        ))}
        <div className="w-2 shrink-0 bg-white" />
        <div className="ml-[14px] w-[45px] shrink-0 border border-[#4f74ac] bg-[#e6edf7]" />
      </div>
    </div>
  );
}

function ExcelWindow() {
  return (
    <section
      className={`absolute top-[45px] right-[6px] bottom-0 flex w-[1004px] flex-col overflow-hidden rounded-t-lg border-x border-t border-[#3f5f94] bg-[#bcd2f2] leading-normal ${UI}`}
    >
      <TitleBar />
      <OfficeButton />
      <div className="flex min-h-0 flex-1 flex-col border-t border-[#a9c0e2] pr-[7px] pl-1.5">
        <TabRow />
        <Ribbon />
        <MessageBar />
        <FormulaBar />
        <div className="flex min-h-0 flex-1 border-t border-[#6b8ebe]">
          <Sheet />
          <VerticalScroll />
        </div>
        <SheetTabs />
      </div>
    </section>
  );
}

export default function App() {
  return (
    <div className="relative flex h-screen flex-col overflow-hidden bg-black">
      <Header />
      <div className="flex min-h-0 flex-1">
        <Sidebar />
        <Canvas />
        <RightStrip />
      </div>
      <ExcelWindow />
    </div>
  );
}
